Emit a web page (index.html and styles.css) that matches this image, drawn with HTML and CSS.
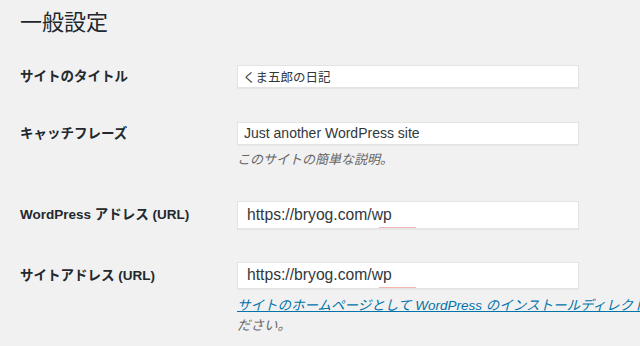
FILE: index.html
```html
<!DOCTYPE html>
<html lang="ja">
<head>
  <meta charset="UTF-8">
  <meta name="viewport" content="width=device-width, initial-scale=1.0">
  <title>一般設定</title>
  <link rel="stylesheet" href="styles.css">
</head>
<body>
  <h1>一般設定</h1>

  <div class="form-table">
    <div class="row row-title">
      <label class="label">サイトのタイトル</label>
      <div class="field field-jp">くま五郎の日記</div>
    </div>

    <div class="row row-tagline">
      <label class="label">キャッチフレーズ</label>
      <div class="field">Just another WordPress site</div>
    </div>
    <div class="row">
      <span></span>
      <p class="description">このサイトの簡単な説明。</p>
    </div>

    <div class="row row-wpurl">
      <label class="label">WordPress アドレス (URL)</label>
      <div class="field field-url">https://bryog.com/wp<span class="typo"></span></div>
    </div>

    <div class="row row-home">
      <label class="label">サイトアドレス (URL)</label>
      <div class="field field-url short">https://bryog.com/wp<span class="typo"></span></div>
    </div>
    <div class="row">
      <span></span>
      <p class="description help"><a href="#">サイトのホームページとして WordPress のインストールディレクトリとは異なる場所を使う場合は</a>、ここにアドレスを入力してく<br>ださい。</p>
    </div>
  </div>
</body>
</html>
```

FILE: styles.css
```css
html, body {
  overflow: hidden;
}
body {
  margin: 0;
  padding: 0 20px;
  background-color: #f1f1f1;
  color: #23282d;
  font-family: "Liberation Sans", "Noto Sans CJK JP", sans-serif;
}
h1 {
  margin: 0;
  padding-top: 6px;
  font-size: 22px;
  font-weight: 400;
  line-height: 28px;
  font-family: "Noto Sans CJK JP", sans-serif;
}
.row {
  display: grid;
  grid-template-columns: 217px 342px;
  align-items: center;
}
.row-title {
  margin-top: 31px;
}
.row-tagline {
  margin-top: 34px;
}
.row-wpurl {
  margin-top: 32px;
}
.row-home {
  margin-top: 33px;
}
.label {
  font-size: 13.5px;
  font-weight: bold;
  line-height: 20px;
  white-space: nowrap;
}
.field {
  position: relative;
  box-sizing: border-box;
  height: 23px;
  padding: 0 6px;
  background-color: #fff;
  border: 1px solid #e4e4e4;
  box-shadow: 0 1px 1px rgba(0, 0, 0, 0.04);
  color: #32373c;
  font-size: 14px;
  line-height: 21px;
  white-space: nowrap;
}
.field-jp {
  padding-left: 5px;
  font-size: 12.5px;
  font-family: "Noto Sans CJK JP", sans-serif;
}
.field-url {
  height: 28px;
  padding-left: 9px;
  font-size: 15.7px;
  line-height: 25px;
}
.field-url.short {
  height: 27px;
  line-height: 24px;
}
.typo::after {
  content: "";
  position: absolute;
  left: 141px;
  bottom: 0;
  width: 37px;
  height: 1px;
  background-color: #f3b6b0;
}
.description {
  margin: 6px 0 0;
  font-size: 13px;
  line-height: 18px;
  font-style: italic;
  color: #666;
  white-space: nowrap;
}
.help {
  margin-top: 7px;
  font-size: 13.5px;
  line-height: 20px;
}
.help a {
  color: #0073aa;
}
```
